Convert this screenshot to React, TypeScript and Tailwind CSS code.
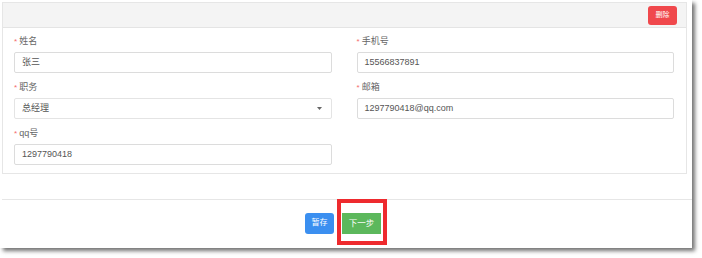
import React from "react";

const font = { fontFamily: '"Liberation Sans", "Noto Sans CJK SC", sans-serif' };

function Label({ text }: { text: string }) {
  return (
    <div className="h-[13px] leading-[13px] text-[9px] text-[#666] mb-[4px] flex items-center">
      <span className="text-[#f56c6c] mr-[2px] text-[8px]">*</span>
      <span>{text}</span>
    </div>
  );
}

function Input({ value }: { value: string }) {
  return (
    <div className="h-[21px] border border-[#dcdcdc] rounded-[2px] bg-white flex items-center px-[7px] text-[9px] text-[#555]">
      {value}
    </div>
  );
}

function Select({ value }: { value: string }) {
  return (
    <div className="h-[21px] border border-[#e4e4e4] rounded-[2px] bg-white flex items-center justify-between pl-[7px] pr-[9px] text-[9px] text-[#555]">
      <span>{value}</span>
      <svg width="5" height="3" viewBox="0 0 5 3">
        <path d="M0 0 L5 0 L2.5 3 Z" fill="#666" />
      </svg>
    </div>
  );
}

function Field({ label, children }: { label: string; children: React.ReactNode }) {
  return (
    <div className="mb-[8px]">
      <Label text={label} />
      {children}
    </div>
  );
}

export default function App() {
  return (
    <div className="w-[702px] h-[258px] bg-white" style={font}>
      <div className="relative w-[692px] h-[248px] bg-white shadow-[3px_3px_4px_rgba(0,0,0,0.55)] flex flex-col">
        <div className="pt-[2px] pl-[2px] pr-[5px]">
          <div className="border border-[#e6e6e6] bg-white">
            <div className="h-[25px] bg-[#f4f4f4] border-b border-[#e4e4e4] flex items-center justify-end pr-[9px]">
              <div className="h-[19px] w-[29px] bg-[#f0484c] rounded-[3px] text-white text-[7px] flex items-center justify-center">
                删除
              </div>
            </div>
            <div className="grid grid-cols-2 gap-x-[25px] pl-[11px] pr-[12px] pt-[7px]">
              <Field label="姓名">
                <Input value="张三" />
              </Field>
              <Field label="手机号">
                <Input value="15566837891" />
              </Field>
              <Field label="职务">
                <Select value="总经理" />
              </Field>
              <Field label="邮箱">
                <Input value="1297790418@qq.com" />
              </Field>
              <Field label="qq号">
                <Input value="1297790418" />
              </Field>
            </div>
          </div>
        </div>
        <div className="mt-[25px] ml-[2px] border-t border-[#e6e6e6] flex-1 flex items-center justify-center pr-[8px] pb-[2px]">
          <div className="flex items-center gap-[8px]">
            <div className="h-[21px] w-[29px] bg-[#3b8ff0] rounded-[3px] text-white text-[8px] flex items-center justify-center">
              暂存
            </div>
            <div className="h-[21px] w-[39px] bg-[#5cb85c] text-white text-[8.5px] flex items-center justify-center">
              下一步
            </div>
          </div>
        </div>
        <div className="absolute left-[337px] top-[199px] w-[50px] h-[46px] border-[4px] border-[#ee2a2e]" />
      </div>
    </div>
  );
}
